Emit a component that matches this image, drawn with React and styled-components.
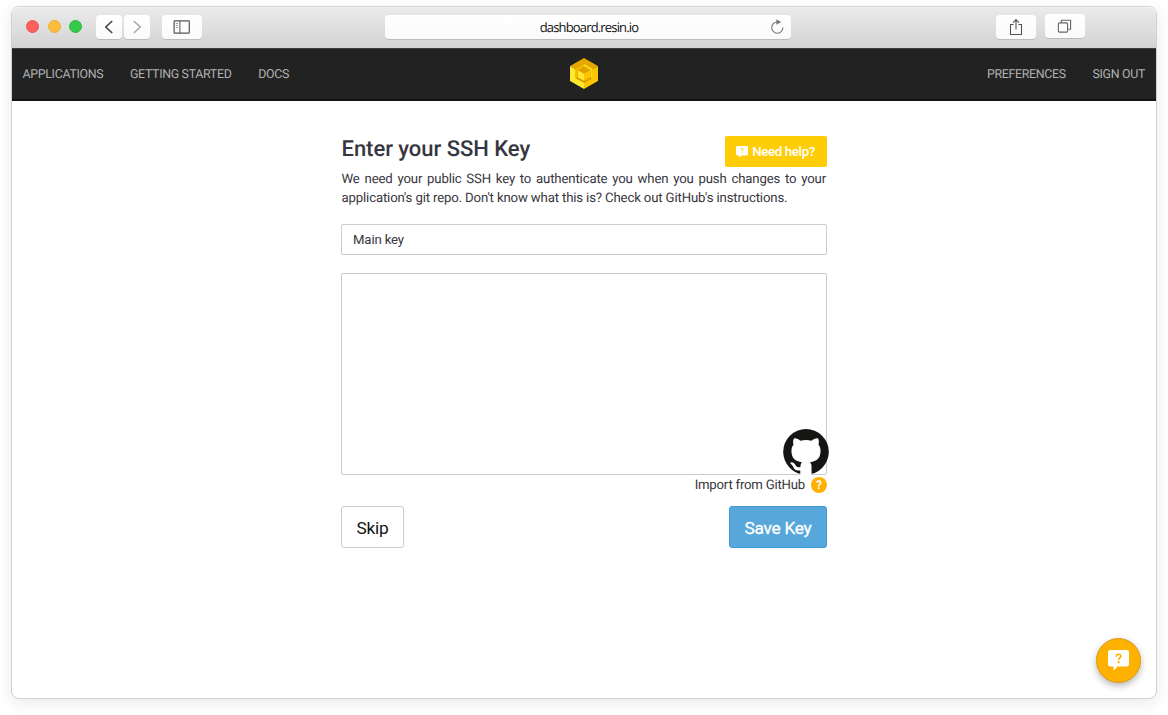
import React from "react";
import styled, { createGlobalStyle } from "styled-components";

const GlobalStyle = createGlobalStyle`
  *, *::before, *::after { box-sizing: border-box; }
  html, body { margin: 0; padding: 0; background: #fff; overflow: hidden; }
  body { font-family: Roboto, "Liberation Sans", sans-serif; color: #373640; text-rendering: geometricPrecision; }
  button, input, textarea { font-family: inherit; margin: 0; }
`;

const Page = styled.div`
  height: 715px;
  padding: 6px 11px 0;
`;

const BrowserWindow = styled.div`
  position: relative;
  width: 1146px;
  height: 693px;
  display: flex;
  flex-direction: column;
  border: 1px solid #d2d2d2;
  border-radius: 8px;
  background: #fff;
  box-shadow: 0 4px 16px rgba(0, 0, 0, 0.09);
`;

const Toolbar = styled.header`
  height: 41px;
  flex: none;
  display: flex;
  align-items: flex-start;
  padding: 8px 71px 0 14px;
  border-radius: 7px 7px 0 0;
  background: linear-gradient(#ebebeb, #d3d3d3);
  box-shadow: inset 0 1px 0 #f3f3f3;
`;

const Lights = styled.div`
  display: flex;
  gap: 8.5px;
  padding-top: 5px;
  margin-right: 14px;
`;

const Light = styled.span`
  width: 13px;
  height: 13px;
  border-radius: 50%;
  background: ${(p) => p.$color};
  border: 1px solid ${(p) => p.$edge};
`;

const ToolButton = styled.span`
  display: flex;
  align-items: center;
  justify-content: center;
  width: ${(p) => p.$width}px;
  height: 24px;
  margin-left: ${(p) => p.$gap || 0}px;
  margin-top: ${(p) => p.$top || 0}px;
  border-radius: 4px;
  background: linear-gradient(#fff, #fafafa);
  box-shadow: 0 1px 0 rgba(0, 0, 0, 0.13);
`;

const AddressBar = styled.div`
  display: flex;
  align-items: center;
  width: 406px;
  height: 24px;
  margin-left: 183px;
  margin-right: auto;
  padding: 0 7px 0 23px;
  border-radius: 4px;
  background: linear-gradient(#fff, #fafafa);
  box-shadow: 0 1px 0 rgba(0, 0, 0, 0.13);
`;

const Url = styled.span`
  flex: 1;
  text-align: center;
  font: 13px/24px "Open Sans", "Noto Sans", sans-serif;
  letter-spacing: -0.84px;
  color: #111;
`;

const NavBar = styled.nav`
  height: 53px;
  flex: none;
  display: grid;
  grid-template-columns: 1fr auto 1fr;
  align-items: center;
  padding: 0 11px 0 10.5px;
  background: #222;
  border-top: 1px solid #3b403b;
  border-bottom: 2px solid #131313;
`;

const NavGroup = styled.div`
  display: flex;
  gap: 26.7px;
  padding-top: 1px;
  justify-content: ${(p) => (p.$end ? "flex-end" : "flex-start")};
`;

const NavLink = styled.a`
  font-size: 12.4px;
  line-height: 16px;
  letter-spacing: -0.32px;
  color: #b0b0b0;
  white-space: nowrap;
`;

const Form = styled.main`
  width: 486px;
  margin: 35px auto 0;
`;

const HeadingRow = styled.div`
  display: flex;
  justify-content: space-between;
  align-items: flex-start;
`;

const Title = styled.h1`
  margin: 0;
  padding: 1px 0 0 0.5px;
  font-size: 22px;
  line-height: 25px;
  font-weight: 500;
  letter-spacing: -0.04px;
`;

const HelpButton = styled.button`
  display: flex;
  align-items: center;
  justify-content: center;
  gap: 4px;
  width: 102px;
  height: 31px;
  padding: 0 1px 0 0;
  border: 0;
  border-radius: 2px;
  background: #ffcd05;
  color: #fff;
  font-size: 13.3px;
  font-weight: 500;
  letter-spacing: -0.36px;
`;

const Intro = styled.p`
  margin: 3px 1px 16px 0.5px;
  font-size: 13.2px;
  line-height: 19px;
  letter-spacing: -0.15px;
  text-align: justify;
`;

const KeyName = styled.input`
  display: block;
  width: 100%;
  height: 31px;
  padding: 0 11px;
  border: 1px solid #ccc;
  border-radius: 2px;
  background: #fff;
  color: #373640;
  font-size: 13.2px;
  letter-spacing: -0.15px;
`;

const KeyBox = styled.div`
  position: relative;
  margin-top: 18px;
`;

const KeyText = styled.textarea`
  display: block;
  width: 100%;
  height: 202px;
  border: 1px solid #ccc;
  border-radius: 2px;
  resize: none;
  background: #fff;
`;

const GitHubBadge = styled.span`
  position: absolute;
  right: -2px;
  bottom: 0;
  width: 46px;
  height: 46px;
  svg { display: block; }
`;

const ImportRow = styled.div`
  display: flex;
  align-items: center;
  justify-content: flex-end;
  gap: 6px;
  height: 19px;
  font-size: 13.2px;
  letter-spacing: -0.22px;
`;

const ImportLabel = styled.span`
  padding-top: 2px;
`;

const HelpDot = styled.span`
  width: 16px;
  height: 16px;
  border-radius: 50%;
  background: #ffb100;
  color: #fff;
  font-size: 12px;
  line-height: 16px;
  font-weight: 700;
  text-align: center;
`;

const Actions = styled.div`
  display: flex;
  justify-content: space-between;
  margin-top: 12px;
`;

const ActionButton = styled.button`
  width: ${(p) => p.$width}px;
  height: 42px;
  padding: 1px 0 0;
  border-radius: 3px;
  border: 1px solid ${(p) => (p.$primary ? "#3f9ad6" : "#ccc")};
  background: ${(p) => (p.$primary ? "#57a7da" : "#fff")};
  color: ${(p) => (p.$primary ? "#fff" : "#111")};
  font-size: 17.3px;
  letter-spacing: -0.25px;
  -webkit-text-stroke: ${(p) => (p.$primary ? "0.3px #fff" : "0")};
`;

const ChatButton = styled.button`
  position: absolute;
  right: 15px;
  bottom: 15px;
  display: flex;
  align-items: center;
  justify-content: center;
  width: 45px;
  height: 45px;
  padding: 0;
  border: 1px solid #d99a1c;
  border-radius: 50%;
  background: #ffb100;
  box-shadow: 0 3px 7px rgba(0, 0, 0, 0.28);
`;

const Chevron = ({ d, color }) => (
  <svg width="10" height="14" viewBox="0 0 10 14" fill="none" stroke={color} strokeWidth="1.6">
    <path d={d} />
  </svg>
);

const SidebarIcon = () => (
  <svg width="18" height="14" viewBox="0 0 18 14" fill="none" stroke="#555">
    <rect x="1.1" y="0.9" width="15.2" height="12.2" rx="0.5" strokeWidth="1.2" />
    <path d="M6.9 1v12" />
    <path d="M2.8 3.5h2.2M2.8 5.5h2.2M2.8 7.5h2.2" strokeWidth="1" stroke="#999" />
  </svg>
);

const ReloadIcon = () => (
  <svg width="14" height="16" viewBox="0 0 14 16">
    <path d="M7.5 3A5.6 5.6 0 1 0 12.9 8.6" fill="none" stroke="#777" strokeWidth="1.1" />
    <path d="M6.4 0.3L11.2 3L6.4 5.8Z" fill="#777" />
  </svg>
);

const ShareIcon = () => (
  <svg width="14" height="18" viewBox="0 0 14 18" fill="none" stroke="#555" strokeWidth="1.1">
    <path d="M4.6 6.5H1.5V16.5H12.5V6.5H9.4" />
    <path d="M7 11.5V1.8M4.1 4.6L7 1.6L9.9 4.6" />
  </svg>
);

const TabsIcon = () => (
  <svg width="16" height="14" viewBox="0 0 16 14" fill="none" stroke="#666" strokeWidth="1.1">
    <rect x="1.4" y="3.9" width="9.2" height="9.2" rx="1" />
    <path d="M4.4 3.4V1.2H13.6V10.3H11.2" />
  </svg>
);

const LogoLink = styled.a`
  display: block;
  height: 33px;
  margin-top: -2px;
`;

const CubeLogo = () => (
  <svg width="30" height="33" viewBox="0 0 30 33">
    <path d="M15 0.5L29.4 8.5V24.5L15 32.5L0.6 24.5V8.5Z" fill="#16162c" />
    <path d="M15 1L29 9L15 17L1 9Z" fill="#e6a800" />
    <path d="M1 9L15 17V32L1 24Z" fill="#ffe92e" />
    <path d="M29 9L15 17V32L29 24Z" fill="#fdc600" />
    <path d="M15 7L23.5 11.8V21.2L15 26L6.5 21.2V11.8Z" fill="#d99b00" />
    <path d="M15 7L23.5 11.8V21.2L21.8 20.2V12.8L15 9Z" fill="#ffe11c" />
    <path d="M6.5 11.8L15 7V9L8.2 12.8V20.2L6.5 21.2Z" fill="#f4bd00" />
    <path d="M8.2 12.8L15 9L21.8 12.8V20.2L15 24L8.2 20.2Z" fill="#f2b600" />
    <path d="M15 10L21 13.4L15 16.8L9 13.4Z" fill="#e0a000" />
    <path d="M9 13.4L15 16.8V23.6L9 20.2Z" fill="#ffe62c" />
    <path d="M21 13.4L15 16.8V23.6L21 20.2Z" fill="#fdc400" />
  </svg>
);

const Bubble = ({ width, height, mark }) => (
  <svg width={width} height={height} viewBox="0 0 21 21">
    <path d="M2.5 0H18.5Q21 0 21 2.5V14Q21 16.5 18.5 16.5H9.5L5.6 20.8V16.5H2.5Q0 16.5 0 14V2.5Q0 0 2.5 0Z" fill="#fff" />
    <path d="M8.2 6.6C8.3 5 9.3 4.3 10.5 4.3C11.9 4.3 12.8 5 12.8 6.2C12.8 7.9 10.6 8 10.6 9.9" fill="none" stroke={mark} strokeWidth="1.6" />
    <rect x="9.7" y="11.2" width="1.9" height="1.9" fill={mark} />
  </svg>
);

const GitHubMark = () => (
  <svg width="46" height="46" viewBox="0 0 24 24">
    <circle cx="12" cy="11.9" r="11.9" fill="#151513" />
    <path
      fill="#fff"
      d="M5.7 4.9C6.8 4.7 8.2 5.5 9.1 6.1C10.9 5.6 13.1 5.6 14.9 6.1C15.8 5.5 17.2 4.7 18.3 4.9C18.9 6.2 18.8 7.4 18.5 8.2C19.3 9.1 19.6 10.2 19.6 11.4C19.6 15.3 17.6 16.9 14.1 17.4C14.7 18 14.9 18.7 14.9 19.7V24H9V21.6C6.6 22 5.8 20.9 5.3 19.7C4.9 18.8 4.2 18.3 3.7 17.7C4.5 17 5.8 17.6 6.4 18.6C7.1 19.8 7.8 20.1 9.1 19.8C9.1 18.7 9.4 17.9 9.9 17.4C6.4 16.9 4.4 15.3 4.4 11.4C4.4 10.2 4.7 9.1 5.5 8.2C5.2 7.4 5.1 6.2 5.7 4.9Z"
    />
  </svg>
);

export default function App() {
  return (
    <Page>
      <GlobalStyle />
      <BrowserWindow>
        <Toolbar>
          <Lights>
            <Light $color="#fc615d" $edge="#ee5550" />
            <Light $color="#fdbc40" $edge="#efae35" />
            <Light $color="#34c94a" $edge="#2dbb42" />
          </Lights>
          <ToolButton $width={26}>
            <Chevron d="M8.2 1L1.8 7L8.2 13" color="#444" />
          </ToolButton>
          <ToolButton $width={26} $gap={2}>
            <Chevron d="M1.8 1L8.2 7L1.8 13" color="#aaa" />
          </ToolButton>
          <ToolButton $width={40} $gap={12}>
            <SidebarIcon />
          </ToolButton>
          <AddressBar>
            <Url>dashboard.resin.io</Url>
            <ReloadIcon />
          </AddressBar>
          <ToolButton $width={40}>
            <ShareIcon />
          </ToolButton>
          <ToolButton $width={40} $gap={9} $top={-1}>
            <TabsIcon />
          </ToolButton>
        </Toolbar>
        <NavBar>
          <NavGroup>
            <NavLink>APPLICATIONS</NavLink>
            <NavLink>GETTING STARTED</NavLink>
            <NavLink>DOCS</NavLink>
          </NavGroup>
          <LogoLink>
            <CubeLogo />
          </LogoLink>
          <NavGroup $end>
            <NavLink>PREFERENCES</NavLink>
            <NavLink>SIGN OUT</NavLink>
          </NavGroup>
        </NavBar>
        <Form>
          <HeadingRow>
            <Title>Enter your SSH Key</Title>
            <HelpButton>
              <Bubble width={12} height={12} mark="#ffcd05" />
              Need help?
            </HelpButton>
          </HeadingRow>
          <Intro>
            We need your public SSH key to authenticate you when you push changes to your
            application's git repo. Don't know what this is? Check out GitHub's instructions.
          </Intro>
          <KeyName defaultValue="Main key" />
          <KeyBox>
            <KeyText />
            <GitHubBadge>
              <GitHubMark />
            </GitHubBadge>
          </KeyBox>
          <ImportRow>
            <ImportLabel>Import from GitHub</ImportLabel>
            <HelpDot>?</HelpDot>
          </ImportRow>
          <Actions>
            <ActionButton $width={63}>Skip</ActionButton>
            <ActionButton $width={98} $primary>
              Save Key
            </ActionButton>
          </Actions>
        </Form>
        <ChatButton>
          <Bubble width={21} height={21} mark="#ffb100" />
        </ChatButton>
      </BrowserWindow>
    </Page>
  );
}
